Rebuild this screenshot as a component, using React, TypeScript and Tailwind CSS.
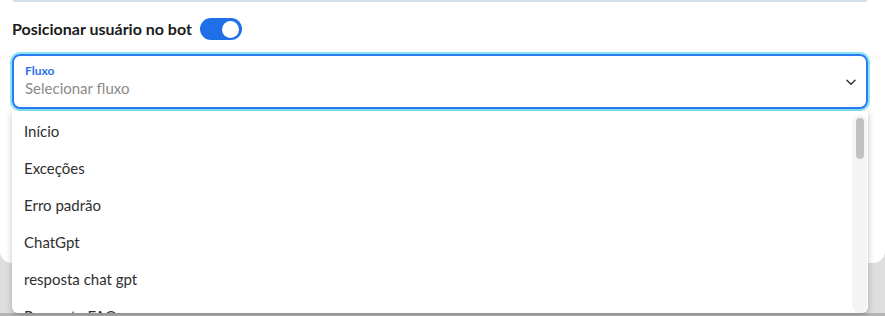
import React from "react";

const items = ["Início", "Exceções", "Erro padrão", "ChatGpt", "resposta chat gpt", "Resposta FAQ"];

export default function App() {
  return (
    <div
      className="relative flex h-[316px] w-[885px] flex-col overflow-hidden bg-[#dedede]"
      style={{ fontFamily: "Lato, 'Noto Sans', sans-serif" }}
    >
      <div className="h-[263px] rounded-b-[12px] bg-white pl-[12px] pr-[17px]">
        <div className="mx-[1px] h-[2px] bg-[#d3dee7]" />
        <div className="mt-[15px] flex items-center gap-[8px]">
          <span className="text-[16px] font-bold text-[#1b1b1b]">Posicionar usuário no bot</span>
          <div className="flex h-[22px] w-[42px] items-center justify-end rounded-full bg-[#1f6fe8] px-[3px]">
            <div className="h-[17px] w-[17px] rounded-full bg-white" />
          </div>
        </div>
        <div className="relative mt-[13px]">
          <div className="flex h-[55px] items-center rounded-[8px] border-2 border-[#2d7bf4] pl-[11px] pr-[8px] shadow-[0_0_0_2px_#86e4f0]">
            <div className="flex flex-1 flex-col pb-[2px]">
              <span className="text-[12px] font-bold leading-[15px] text-[#2d6ef0]">Fluxo</span>
              <span className="text-[15px] leading-[21px] text-[#8a8a8a]">Selecionar fluxo</span>
            </div>
            <svg width="14" height="14" viewBox="0 0 24 24" fill="none" stroke="#333" strokeWidth="2.4" strokeLinecap="round" strokeLinejoin="round">
              <path d="M5 9l7 7 7-7" />
            </svg>
          </div>
          <div className="absolute left-0 right-0 top-[57px] z-10 flex h-[202px] overflow-hidden rounded-b-[6px] bg-white shadow-[0_2px_6px_rgba(0,0,0,0.25)]">
            <div className="flex flex-1 flex-col pl-[12px] pt-[2px]">
              {items.map((t) => (
                <div key={t} className="flex h-[37px] shrink-0 items-center text-[15px] text-[#2f2f2f]">
                  {t}
                </div>
              ))}
            </div>
            <div className="mr-[1px] mt-[4px] flex w-[15px] justify-center rounded-[8px] bg-[#f4f4f4] pt-[3px]">
              <div className="h-[41px] w-[8px] rounded-full bg-[#c1c1c1]" />
            </div>
          </div>
        </div>
      </div>
      <div className="flex-1" />
      <div className="h-[3px] bg-[#b5b5b5]" />
    </div>
  );
}
